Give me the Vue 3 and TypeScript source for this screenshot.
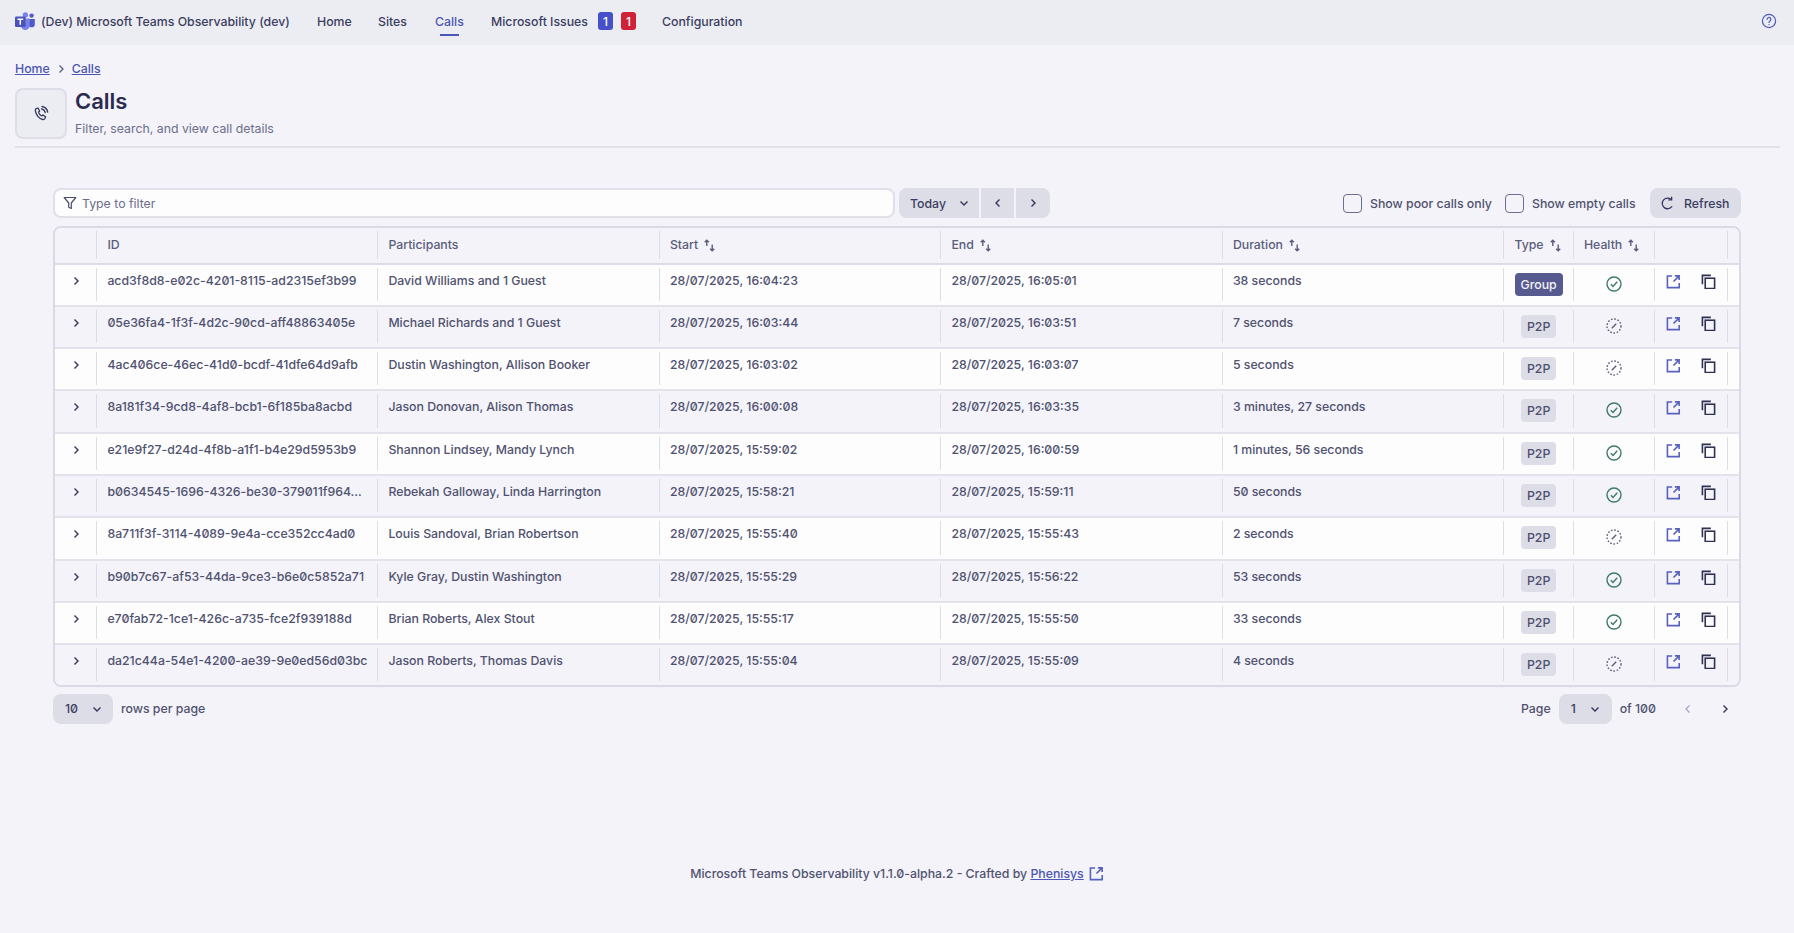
<script setup lang="ts">
interface Call {
  id: string
  who: string
  start: string
  end: string
  dur: string
  type: string
  ok: boolean
}
const rows: Call[] = [
  { id: 'acd3f8d8-e02c-4201-8115-ad2315ef3b99', who: 'David Williams and 1 Guest', start: '28/07/2025, 16:04:23', end: '28/07/2025, 16:05:01', dur: '38 seconds', type: 'Group', ok: true },
  { id: '05e36fa4-1f3f-4d2c-90cd-aff48863405e', who: 'Michael Richards and 1 Guest', start: '28/07/2025, 16:03:44', end: '28/07/2025, 16:03:51', dur: '7 seconds', type: 'P2P', ok: false },
  { id: '4ac406ce-46ec-41d0-bcdf-41dfe64d9afb', who: 'Dustin Washington, Allison Booker', start: '28/07/2025, 16:03:02', end: '28/07/2025, 16:03:07', dur: '5 seconds', type: 'P2P', ok: false },
  { id: '8a181f34-9cd8-4af8-bcb1-6f185ba8acbd', who: 'Jason Donovan, Alison Thomas', start: '28/07/2025, 16:00:08', end: '28/07/2025, 16:03:35', dur: '3 minutes, 27 seconds', type: 'P2P', ok: true },
  { id: 'e21e9f27-d24d-4f8b-a1f1-b4e29d5953b9', who: 'Shannon Lindsey, Mandy Lynch', start: '28/07/2025, 15:59:02', end: '28/07/2025, 16:00:59', dur: '1 minutes, 56 seconds', type: 'P2P', ok: true },
  { id: 'b0634545-1696-4326-be30-379011f964…', who: 'Rebekah Galloway, Linda Harrington', start: '28/07/2025, 15:58:21', end: '28/07/2025, 15:59:11', dur: '50 seconds', type: 'P2P', ok: true },
  { id: '8a711f3f-3114-4089-9e4a-cce352cc4ad0', who: 'Louis Sandoval, Brian Robertson', start: '28/07/2025, 15:55:40', end: '28/07/2025, 15:55:43', dur: '2 seconds', type: 'P2P', ok: false },
  { id: 'b90b7c67-af53-44da-9ce3-b6e0c5852a71', who: 'Kyle Gray, Dustin Washington', start: '28/07/2025, 15:55:29', end: '28/07/2025, 15:56:22', dur: '53 seconds', type: 'P2P', ok: true },
  { id: 'e70fab72-1ce1-426c-a735-fce2f939188d', who: 'Brian Roberts, Alex Stout', start: '28/07/2025, 15:55:17', end: '28/07/2025, 15:55:50', dur: '33 seconds', type: 'P2P', ok: true },
  { id: 'da21c44a-54e1-4200-ae39-9e0ed56d03bc', who: 'Jason Roberts, Thomas Davis', start: '28/07/2025, 15:55:04', end: '28/07/2025, 15:55:09', dur: '4 seconds', type: 'P2P', ok: false },
]
const sortable = ['Start', 'End', 'Duration']
</script>

<template>
  <div class="page">
    <nav class="nav">
      <svg class="logo" viewBox="0 0 20 18" width="20" height="18">
        <circle cx="16.6" cy="3.6" r="2.2" fill="#5059C9" />
        <path d="M13.5 7h6.3v5.2a3.1 3.1 0 0 1-6.3 0z" fill="#5059C9" />
        <circle cx="10.4" cy="2.9" r="2.7" fill="#7B83EB" />
        <path d="M6 6.6h8.6v7.2a4.3 4.3 0 0 1-8.6 0z" fill="#7B83EB" />
        <rect x="0" y="4.4" width="10.6" height="10.6" rx="1" fill="#4B53BC" />
        <path d="M2.4 7.2h5.8M5.3 7.2v5.6" stroke="#fff" stroke-width="1.5" fill="none" />
      </svg>
      <span class="brand">(Dev) Microsoft Teams Observability (dev)</span>
      <a class="nl home">Home</a>
      <a class="nl sites">Sites</a>
      <a class="nl calls">Calls</a>
      <a class="nl issues">Microsoft Issues</a>
      <span class="bdg blue">1</span>
      <span class="bdg red">1</span>
      <a class="nl conf">Configuration</a>
      <svg class="help" viewBox="0 0 16 16" width="16" height="16" fill="none" stroke="#5159B8" stroke-width="1.2" stroke-linecap="round">
        <circle cx="8" cy="8" r="6.6" />
        <path d="M6.1 6.3a1.9 1.9 0 1 1 2.9 1.6c-.6.4-1 .8-1 1.5" />
        <path d="M8 11.5v.2" />
      </svg>
    </nav>

    <header class="head">
      <div class="crumbs">
        <a>Home</a>
        <svg viewBox="0 0 8 10" width="8" height="10" fill="none" stroke="#5b5d7c" stroke-width="1.3"><path d="M2.5 1.5 6 5 2.5 8.5" /></svg>
        <a>Calls</a>
      </div>
      <div class="title-row">
        <div class="icon-box">
          <svg viewBox="0 0 18 18" width="18" height="18" fill="none" stroke="#34365a" stroke-width="1.3" stroke-linecap="round" stroke-linejoin="round">
            <path d="M4.2 3.6 6 3l1.6 3-1.1 1.2c.4 1.5 1.7 3 3.2 3.7l1.3-1 2.6 1.9-.7 1.7c-.4.8-1.3 1.2-2.2 1C7 13.7 3.9 9.8 3.3 5.6c-.1-.9.2-1.7.9-2z" />
            <path d="M9.5 3.8a5 5 0 0 1 3.8 3.8M10 1.5a7 7 0 0 1 5.700 5.700" />
          </svg>
        </div>
        <div>
          <h1>Calls</h1>
          <p>Filter, search, and view call details</p>
        </div>
      </div>
    </header>

    <main class="main">
      <div class="toolbar">
        <label class="filter">
          <svg viewBox="0 0 14 14" width="14" height="14" fill="none" stroke="#4a4c6b" stroke-width="1.2" stroke-linejoin="round"><path d="M1.2 1.5h11.6L8.3 7v5.5l-2.6-1.2V7z" /></svg>
          <span>Type to filter</span>
        </label>
        <div class="btn today">Today
          <svg viewBox="0 0 10 10" width="10" height="10" fill="none" stroke="#34365a" stroke-width="1.4"><path d="M1.5 3.5 5 7l3.5-3.5" /></svg>
        </div>
        <div class="btn prev"><svg viewBox="0 0 10 10" width="10" height="10" fill="none" stroke="#34365a" stroke-width="1.4"><path d="M6.5 1.5 3 5l3.5 3.5" /></svg></div>
        <div class="btn next"><svg viewBox="0 0 10 10" width="10" height="10" fill="none" stroke="#34365a" stroke-width="1.4"><path d="M3.5 1.5 7 5 3.5 8.5" /></svg></div>
        <div class="spacer"></div>
        <span class="box"></span><span class="cb-label first">Show poor calls only</span>
        <span class="box"></span><span class="cb-label">Show empty calls</span>
        <div class="btn refresh">
          <svg viewBox="0 0 16 16" width="15" height="15" fill="none" stroke="#34365a" stroke-width="1.4" stroke-linecap="round"><path d="M12.6 11.4A5.7 5.7 0 1 1 11.7 3.5" /><path d="M12.4 1.2v3h-3" /></svg>
          Refresh
        </div>
      </div>

      <div class="table">
        <div class="row hdr">
          <div class="c0"></div>
          <div class="cell">ID</div>
          <div class="cell">Participants</div>
          <div v-for="s in sortable" :key="s" class="cell">{{ s }}
            <svg class="sort" viewBox="0 0 12 12" width="13" height="13" fill="none" stroke="#5b5d7c" stroke-width="1.3"><path d="M3.5 6.5V1.2M1.6 3.1l1.9-1.9 1.9 1.9M8.5 5v5.8M6.6 8.9l1.900 1.900 1.900-1.900" /></svg>
          </div>
          <div class="cell">Type
            <svg class="sort" viewBox="0 0 12 12" width="13" height="13" fill="none" stroke="#5b5d7c" stroke-width="1.3"><path d="M3.5 6.5V1.2M1.6 3.1l1.9-1.9 1.9 1.9M8.5 5v5.8M6.6 8.9l1.900 1.900 1.900-1.900" /></svg>
          </div>
          <div class="cell">Health
            <svg class="sort" viewBox="0 0 12 12" width="13" height="13" fill="none" stroke="#5b5d7c" stroke-width="1.3"><path d="M3.5 6.5V1.2M1.6 3.1l1.9-1.9 1.9 1.9M8.5 5v5.8M6.6 8.9l1.900 1.900 1.900-1.900" /></svg>
          </div>
          <div class="cell"></div>
          <div class="cell"></div>
        </div>
        <div v-for="(r, i) in rows" :key="r.id" class="row" :class="{ alt: i % 2 === 1, last: i === rows.length - 1 }">
          <div class="c0">
            <svg viewBox="0 0 10 10" width="10" height="10" fill="none" stroke="#34365a" stroke-width="1.4"><path d="M3.5 1.5 7 5 3.5 8.5" /></svg>
          </div>
          <div class="cell">{{ r.id }}</div>
          <div class="cell">{{ r.who }}</div>
          <div class="cell">{{ r.start }}</div>
          <div class="cell">{{ r.end }}</div>
          <div class="cell">{{ r.dur }}</div>
          <div class="cell mid">
            <span class="tag" :class="{ group: r.type === 'Group' }">{{ r.type }}</span>
          </div>
          <div class="cell mid">
            <svg v-if="r.ok" viewBox="0 0 16 16" width="16" height="16" fill="none" stroke="#3d7a67" stroke-width="1.4"><circle cx="8" cy="8" r="7" /><path d="M4.8 8.3 7 10.4l4.2-4.6" /></svg>
            <svg v-else viewBox="0 0 16 16" width="16" height="16" fill="none" stroke="#5a5c78" stroke-width="1.4"><circle cx="8" cy="8" r="7" stroke-dasharray="1.6 1.7" /><path d="M5.8 10.2 10.2 5.8" /></svg>
          </div>
          <div class="cell acts">
            <svg viewBox="0 0 16 16" width="15" height="15" fill="none" stroke="#5860c0" stroke-width="1.7"><path d="M6.5 2.2H1.5v12.3h12.6V9.5" /><path d="M8 8l5.500-5.500M9.500 2h4.500v4.500" /></svg>
            <svg viewBox="0 0 16 16" width="15" height="15" fill="none" stroke="#2f3150" stroke-width="1.7"><path d="M1.5 11V1.5h9" /><rect x="4.5" y="4.5" width="10" height="11" /></svg>
          </div>
          <div class="cell"></div>
        </div>
      </div>

      <div class="pager">
        <div class="btn size">10
          <svg viewBox="0 0 10 10" width="10" height="10" fill="none" stroke="#34365a" stroke-width="1.4"><path d="M1.5 3.5 5 7l3.5-3.5" /></svg>
        </div>
        <span class="rpp">rows per page</span>
        <div class="spacer"></div>
        <span>Page</span>
        <div class="btn pnum">1
          <svg viewBox="0 0 10 10" width="10" height="10" fill="none" stroke="#34365a" stroke-width="1.4"><path d="M1.5 3.5 5 7l3.5-3.5" /></svg>
        </div>
        <span>of 100</span>
        <svg class="pg-prev" viewBox="0 0 10 10" width="10" height="10" fill="none" stroke="#a9abbc" stroke-width="1.4"><path d="M6.5 1.5 3 5l3.5 3.5" /></svg>
        <svg class="pg-next" viewBox="0 0 10 10" width="10" height="10" fill="none" stroke="#34365a" stroke-width="1.4"><path d="M3.5 1.5 7 5 3.5 8.5" /></svg>
      </div>
    </main>

    <footer class="footer">
      <span>Microsoft Teams Observability v1.1.0-alpha.2 - Crafted by <a>Phenisys</a></span>
      <svg viewBox="0 0 16 16" width="15" height="15" fill="none" stroke="#5860c0" stroke-width="1.7"><path d="M6.5 2.2H1.5v12.3h12.6V9.5" /><path d="M8 8l5.500-5.500M9.500 2h4.500v4.500" /></svg>
    </footer>
  </div>
</template>

<style>
html, body { margin: 0; background: #f3f3f9; }
</style>

<style scoped>
.page {
  height: 933px;
  overflow: hidden;
  background: #f3f3f9;
  color: #50526f;
  font-family: Inter, "Noto Sans", sans-serif;
  font-size: 12.3px;
  font-weight: 500;
  font-feature-settings: "zero" 1;
  display: flex;
  flex-direction: column;
}
.nav {
  height: 45px;
  flex: none;
  background: #ecedf3;
  display: flex;
  align-items: center;
  padding: 0 15px 3px 15px;
  box-sizing: border-box;
  color: #3b3d5f;
}
.logo { flex: none; margin-right: 6px; }
.brand { width: 276px; white-space: nowrap; }
.nl { white-space: nowrap; }
.home { width: 61px; }
.sites { width: 57px; }
.calls {
  width: 56px;
  color: #4d55b5;
  position: relative;
}
.calls::after {
  content: "";
  position: absolute;
  left: 5px;
  top: 20px;
  width: 19px;
  height: 2px;
  background: #4d55b5;
}
.issues { width: 107px; }
.bdg {
  width: 15px;
  height: 18px;
  border-radius: 3px;
  color: #fff;
  display: flex;
  align-items: center;
  justify-content: center;
  font-size: 12px;
}
.blue { background: #4650c8; margin-right: 8px; }
.red { background: #cf2239; margin-right: 26px; }
.help { margin-left: auto; margin-right: 2px; }
.head { padding: 16px 14px 0 15px; }
.crumbs {
  height: 16px;
  display: flex;
  align-items: center;
  gap: 7px;
  line-height: 16px;
}
.crumbs a { color: #4d55b5; text-decoration: underline; }
.title-row {
  margin-top: 11px;
  padding-bottom: 7px;
  border-bottom: 2px solid #e0e1e9;
  display: flex;
  gap: 8px;
}
.icon-box {
  width: 52px;
  height: 51px;
  box-sizing: border-box;
  border: 2px solid #dddee7;
  border-radius: 8px;
  background: #ecedf3;
  display: flex;
  align-items: center;
  justify-content: center;
}
h1 {
  margin: 0;
  font-size: 22px;
  line-height: 26px;
  font-weight: 600;
  color: #2a2b4e;
}
.title-row p {
  margin: 7px 0 0;
  line-height: 16px;
  color: #6c6e8a;
  font-weight: 400;
}
.main { padding: 40px 53px 0; }
.toolbar { display: flex; align-items: center; height: 30px; }
.filter {
  width: 842px;
  height: 30px;
  box-sizing: border-box;
  border: 2px solid #dfe0e8;
  border-radius: 8px;
  background: #fdfdfe;
  display: flex;
  align-items: center;
  gap: 5px;
  padding-left: 8px;
  color: #6c6e8a;
  font-weight: 400;
}
.btn {
  height: 30px;
  box-sizing: border-box;
  background: #dcdde7;
  display: flex;
  align-items: center;
  color: #3b3d5f;
  flex: none;
}
.today {
  width: 80px;
  margin-left: 4px;
  border-radius: 8px 0 0 8px;
  padding-left: 11px;
  gap: 13px;
}
.prev, .next { width: 33px; justify-content: center; margin-left: 2px; }
.next { border-radius: 0 8px 8px 0; width: 34px; }
.spacer { flex: 1; }
.box {
  width: 19px;
  height: 19px;
  box-sizing: border-box;
  border: 1.5px solid #6c6e8a;
  border-radius: 4px;
  flex: none;
}
.cb-label { margin-left: 8px; width: 118px; white-space: nowrap; }
.cb-label.first { width: 135px; }
.refresh {
  width: 91px;
  border-radius: 8px;
  padding-left: 10px;
  gap: 9px;
}
.table {
  margin-top: 8px;
  border: 2px solid #d9dae5;
  border-radius: 8px;
  overflow: hidden;
}
.row {
  display: grid;
  grid-template-columns: 41.4px 281px 281.5px 281.5px 281.5px 281.5px 69.5px 81.6px 73px 1fr;
  height: 42.3px;
  box-sizing: border-box;
  border-bottom: 2px solid #e2e3eb;
  background: #fdfdfe;
}
.row.alt { background: #f3f3f9; }
.row.last { border-bottom: 0; height: 40.3px; }
.row.hdr {
  height: 36.5px;
  background: #f3f3f9;
  border-bottom: 2px solid #dcdde6;
  color: #5b5d7c;
}
.cell {
  margin: 3px 0 4px;
  border-left: 1px solid #dcdde6;
  padding: 4px 0 0 10px;
  line-height: 17px;
  white-space: nowrap;
  overflow: hidden;
}
.c0 {
  display: flex;
  justify-content: center;
  padding-top: 11px;
  box-sizing: border-box;
}
.hdr .cell {
  padding-top: 5px;
  display: flex;
  align-items: flex-start;
  gap: 5px;
}
.sort { margin-top: 3px; }
.mid {
  padding: 5px 0 0;
  display: flex;
  justify-content: center;
  align-items: flex-start;
}
.mid svg { margin-top: 3px; }
.tag {
  height: 23px;
  line-height: 23px;
  padding: 0 6px;
  border-radius: 4px;
  background: #dcdde7;
  color: #4d4f6e;
}
.tag.group { background: #565a8e; color: #f3f3f9; padding: 0 6px; }
.acts {
  padding: 6px 0 0 11px;
  display: flex;
  gap: 20px;
  align-items: flex-start;
}
.pager {
  margin-top: 6.5px;
  display: flex;
  align-items: center;
  height: 30px;
}
.size {
  width: 60px;
  border-radius: 8px;
  padding-left: 12px;
  gap: 14px;
}
.rpp { margin-left: 8px; }
.pnum {
  width: 53px;
  margin: 0 8px;
  border-radius: 8px;
  padding-left: 12px;
  gap: 14px;
}
.pg-prev { margin-left: 27px; }
.pg-next { margin: 0 11px 0 27px; }
.footer {
  margin-top: 142px;
  height: 16px;
  display: flex;
  justify-content: center;
  align-items: center;
  gap: 5px;
}
.footer a { color: #4d55b5; text-decoration: underline; }
</style>
